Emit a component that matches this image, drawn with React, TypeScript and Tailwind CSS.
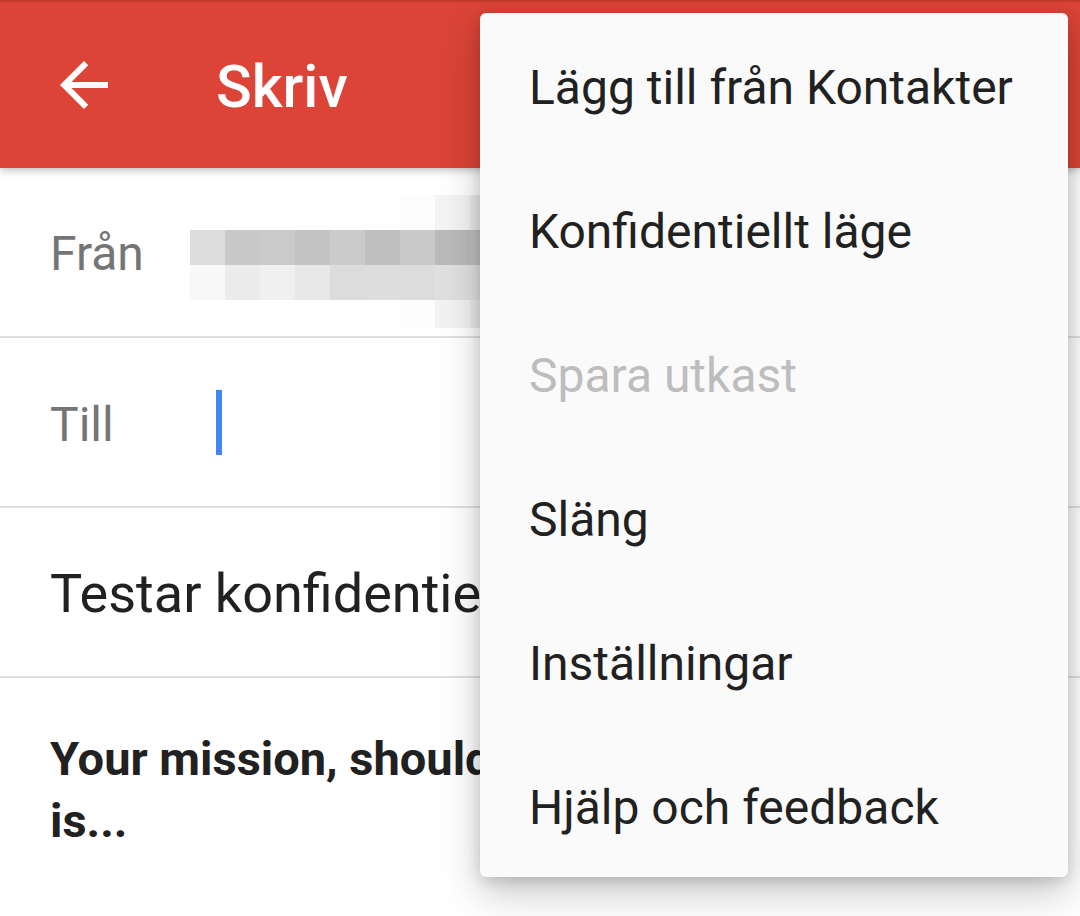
import React from 'react';

const menuItems = [
  { id: 'contacts', label: 'Lägg till från Kontakter', disabled: false },
  { id: 'confidential', label: 'Konfidentiellt läge', disabled: false },
  { id: 'draft', label: 'Spara utkast', disabled: true },
  { id: 'discard', label: 'Släng', disabled: false },
  { id: 'settings', label: 'Inställningar', disabled: false },
  { id: 'help', label: 'Hjälp och feedback', disabled: false },
];

// blurred sender address, one entry per 35px block
const pixelRows = [
  { h: 'h-[35px]', cells: ['bg-white', 'bg-white', 'bg-white', 'bg-white', 'bg-white', 'bg-white', 'bg-[#fdfdfd]', 'bg-[#f4f4f4]', 'bg-[#ececec]'] },
  { h: 'h-[35px]', cells: ['bg-[#dcdcdc]', 'bg-[#c8c8c8]', 'bg-[#cacaca]', 'bg-[#c3c3c3]', 'bg-[#cbcbcb]', 'bg-[#bfbfbf]', 'bg-[#c9c9c9]', 'bg-[#bababa]', 'bg-[#c0c0c0]'] },
  { h: 'h-[35px]', cells: ['bg-[#f8f8f8]', 'bg-[#ececec]', 'bg-[#f0f0f0]', 'bg-[#e8e8e8]', 'bg-[#dcdcdc]', 'bg-[#dddddd]', 'bg-[#dcdcdc]', 'bg-[#e0e0e0]', 'bg-[#e2e2e2]'] },
  { h: 'h-[28px]', cells: ['bg-white', 'bg-white', 'bg-white', 'bg-white', 'bg-white', 'bg-white', 'bg-[#fdfdfd]', 'bg-[#f2f2f2]', 'bg-[#ececec]'] },
];

function BackArrow() {
  return (
    <svg width="72" height="72" viewBox="0 0 24 24" fill="#ffffff">
      <path d="M20 11H7.83l5.59-5.59L12 4l-8 8 8 8 1.41-1.41L7.83 13H20v-2z" />
    </svg>
  );
}

export default function App() {
  return (
    <div className="relative w-[1080px] h-[916px] overflow-hidden bg-white font-['Roboto',sans-serif]">
      <header className="relative z-10 h-[168px] flex items-center pl-[48px] bg-[#db4437] border-t-2 border-[#c5392c] shadow-[0_2px_8px_rgba(0,0,0,0.28)]">
        <BackArrow />
        <h1 className="ml-[96px] pt-[2px] text-[59px] leading-none font-medium text-white">Skriv</h1>
      </header>

      <div className="flex h-[170px] items-center border-b-2 border-[#e0e0e0]">
        <span className="w-[190px] pl-[50px] pt-[4px] text-[48px] leading-none text-[#757575]">Från</span>
        <div className="self-start mt-[27px] flex flex-col">
          {pixelRows.map((row, i) => (
            <div key={i} className={`flex ${row.h}`}>
              {row.cells.map((c, j) => (
                <div key={j} className={`w-[35px] ${c}`} />
              ))}
            </div>
          ))}
        </div>
      </div>

      <div className="flex h-[170px] items-center border-b-2 border-[#e0e0e0]">
        <span className="w-[190px] pl-[50px] pt-[6px] text-[48px] leading-none text-[#757575]">Till</span>
        <div className="ml-[26px] w-[6px] h-[65px] bg-[#4285f4]" />
      </div>

      <div className="flex h-[170px] items-center pt-[4px] pl-[50px] border-b-2 border-[#e0e0e0]">
        <span className="text-[54px] leading-none text-[#212121] whitespace-nowrap">Testar konfidentiellt läge</span>
      </div>

      <div className="pt-[50px] pl-[50px] pr-[50px]">
        <p className="text-[47px] leading-[62px] font-bold text-[#212121]">
          Your mission, should you choose to accept it,
          <br />
          is...
        </p>
      </div>

      <div className="absolute top-[13px] left-[480px] z-20 w-[588px] h-[864px] pt-[3px] rounded-[6px] bg-[#fafafa] shadow-[0_16px_40px_rgba(0,0,0,0.22),0_4px_14px_rgba(0,0,0,0.14)]">
        {menuItems.map((item) => (
          <div key={item.id} className="h-[144px] flex items-center pl-[49px]">
            <span className={`text-[48px] leading-none whitespace-nowrap ${item.disabled ? 'text-[#bdbdbd]' : 'text-[#212121]'}`}>
              {item.label}
            </span>
          </div>
        ))}
      </div>
    </div>
  );
}
